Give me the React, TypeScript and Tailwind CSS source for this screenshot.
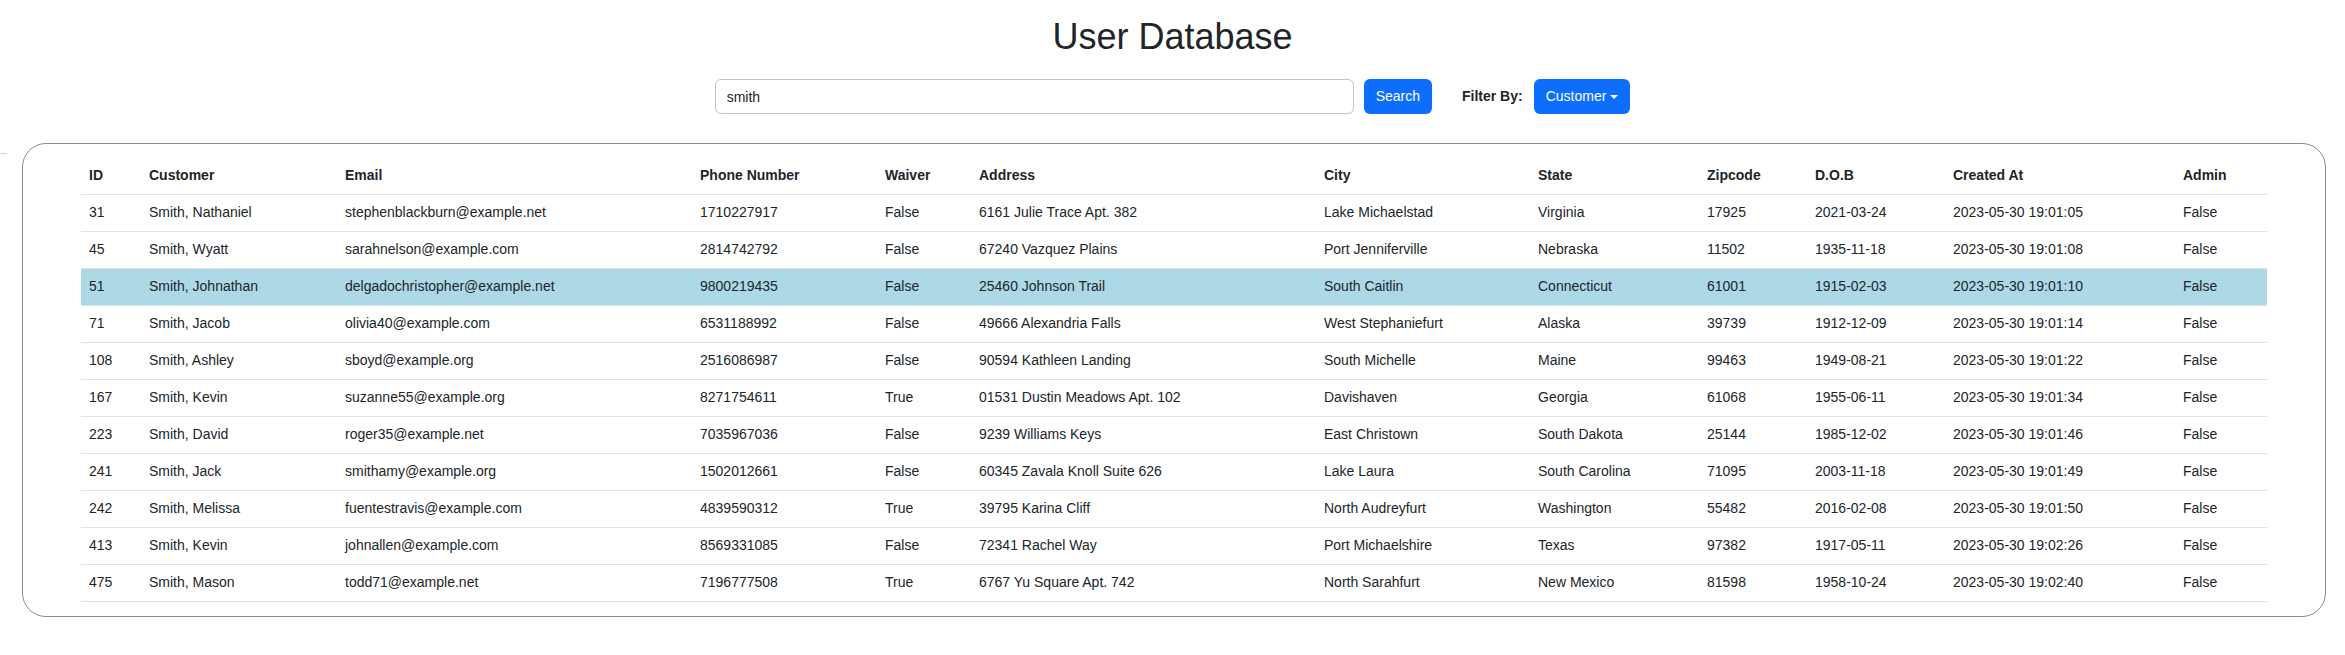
import { useState } from "react";

const columns = [
  { label: "ID", width: "w-[60px]" },
  { label: "Customer", width: "w-[196px]" },
  { label: "Email", width: "w-[355px]" },
  { label: "Phone Number", width: "w-[185px]" },
  { label: "Waiver", width: "w-[94px]" },
  { label: "Address", width: "w-[345px]" },
  { label: "City", width: "w-[214px]" },
  { label: "State", width: "w-[169px]" },
  { label: "Zipcode", width: "w-[108px]" },
  { label: "D.O.B", width: "w-[138px]" },
  { label: "Created At", width: "w-[230px]" },
  { label: "Admin", width: "w-[92px]" },
];

const users = [
  ["31", "Smith, Nathaniel", "stephenblackburn@example.net", "1710227917", "False", "6161 Julie Trace Apt. 382", "Lake Michaelstad", "Virginia", "17925", "2021-03-24", "2023-05-30 19:01:05", "False"],
  ["45", "Smith, Wyatt", "sarahnelson@example.com", "2814742792", "False", "67240 Vazquez Plains", "Port Jenniferville", "Nebraska", "11502", "1935-11-18", "2023-05-30 19:01:08", "False"],
  ["51", "Smith, Johnathan", "delgadochristopher@example.net", "9800219435", "False", "25460 Johnson Trail", "South Caitlin", "Connecticut", "61001", "1915-02-03", "2023-05-30 19:01:10", "False"],
  ["71", "Smith, Jacob", "olivia40@example.com", "6531188992", "False", "49666 Alexandria Falls", "West Stephaniefurt", "Alaska", "39739", "1912-12-09", "2023-05-30 19:01:14", "False"],
  ["108", "Smith, Ashley", "sboyd@example.org", "2516086987", "False", "90594 Kathleen Landing", "South Michelle", "Maine", "99463", "1949-08-21", "2023-05-30 19:01:22", "False"],
  ["167", "Smith, Kevin", "suzanne55@example.org", "8271754611", "True", "01531 Dustin Meadows Apt. 102", "Davishaven", "Georgia", "61068", "1955-06-11", "2023-05-30 19:01:34", "False"],
  ["223", "Smith, David", "roger35@example.net", "7035967036", "False", "9239 Williams Keys", "East Christown", "South Dakota", "25144", "1985-12-02", "2023-05-30 19:01:46", "False"],
  ["241", "Smith, Jack", "smithamy@example.org", "1502012661", "False", "60345 Zavala Knoll Suite 626", "Lake Laura", "South Carolina", "71095", "2003-11-18", "2023-05-30 19:01:49", "False"],
  ["242", "Smith, Melissa", "fuentestravis@example.com", "4839590312", "True", "39795 Karina Cliff", "North Audreyfurt", "Washington", "55482", "2016-02-08", "2023-05-30 19:01:50", "False"],
  ["413", "Smith, Kevin", "johnallen@example.com", "8569331085", "False", "72341 Rachel Way", "Port Michaelshire", "Texas", "97382", "1917-05-11", "2023-05-30 19:02:26", "False"],
  ["475", "Smith, Mason", "todd71@example.net", "7196777508", "True", "6767 Yu Square Apt. 742", "North Sarahfurt", "New Mexico", "81598", "1958-10-24", "2023-05-30 19:02:40", "False"],
];

export default function App() {
  const [query, setQuery] = useState("smith");
  const selectedId = "51";

  return (
    <div className="min-h-[655px] bg-white font-['Liberation_Sans',Arial,sans-serif] text-[14px] text-[#212529]">
      <h1 className="pt-[15px] text-center text-[36px] leading-[43px] font-normal">User Database</h1>

      <div className="mt-[21px] flex items-center justify-center">
        <input
          value={query}
          onChange={(e) => setQuery(e.target.value)}
          className="h-[35px] w-[639px] rounded-[6px] border border-[#c4c4c4] px-[11px] text-[14px] text-[#212529] outline-none"
        />
        <button className="ml-[10px] h-[35px] rounded-[6px] bg-[#0d6efd] px-3 text-[14px] text-white">
          Search
        </button>
        <span className="ml-[30px] font-bold">Filter By:</span>
        <button className="ml-[11px] flex h-[35px] items-center rounded-[6px] bg-[#0d6efd] pl-3 pr-[12px] text-[14px] text-white">
          Customer
          <span className="ml-[4px] h-0 w-0 border-x-[4px] border-t-[4px] border-x-transparent border-t-white" />
        </button>
      </div>

      <div className="mt-[29px] flex items-start">
        <div className="w-[22px] pt-[10px]">
          <div className="h-px w-[7px] bg-[#d6d6d6]" />
        </div>
        <div className="w-[2304px] rounded-[24px] border border-[#8a8a8a] pt-[13px] pb-[14px]">
          <table className="mx-auto w-[2186px] table-fixed border-collapse">
            <colgroup>
              {columns.map((c) => (
                <col key={c.label} className={c.width} />
              ))}
            </colgroup>
            <thead>
              <tr className="h-[37px] border-b border-[#dee2e6]">
                {columns.map((c) => (
                  <th key={c.label} className="px-2 text-left align-middle font-bold">
                    {c.label}
                  </th>
                ))}
              </tr>
            </thead>
            <tbody>
              {users.map((row) => (
                <tr
                  key={row[0]}
                  className={`h-[37px] border-b border-[#dee2e6] ${row[0] === selectedId ? "bg-[#add8e6]" : ""}`}
                >
                  {row.map((cell, i) => (
                    <td key={i} className="truncate px-2 align-middle">
                      {cell}
                    </td>
                  ))}
                </tr>
              ))}
            </tbody>
          </table>
        </div>
      </div>
    </div>
  );
}
